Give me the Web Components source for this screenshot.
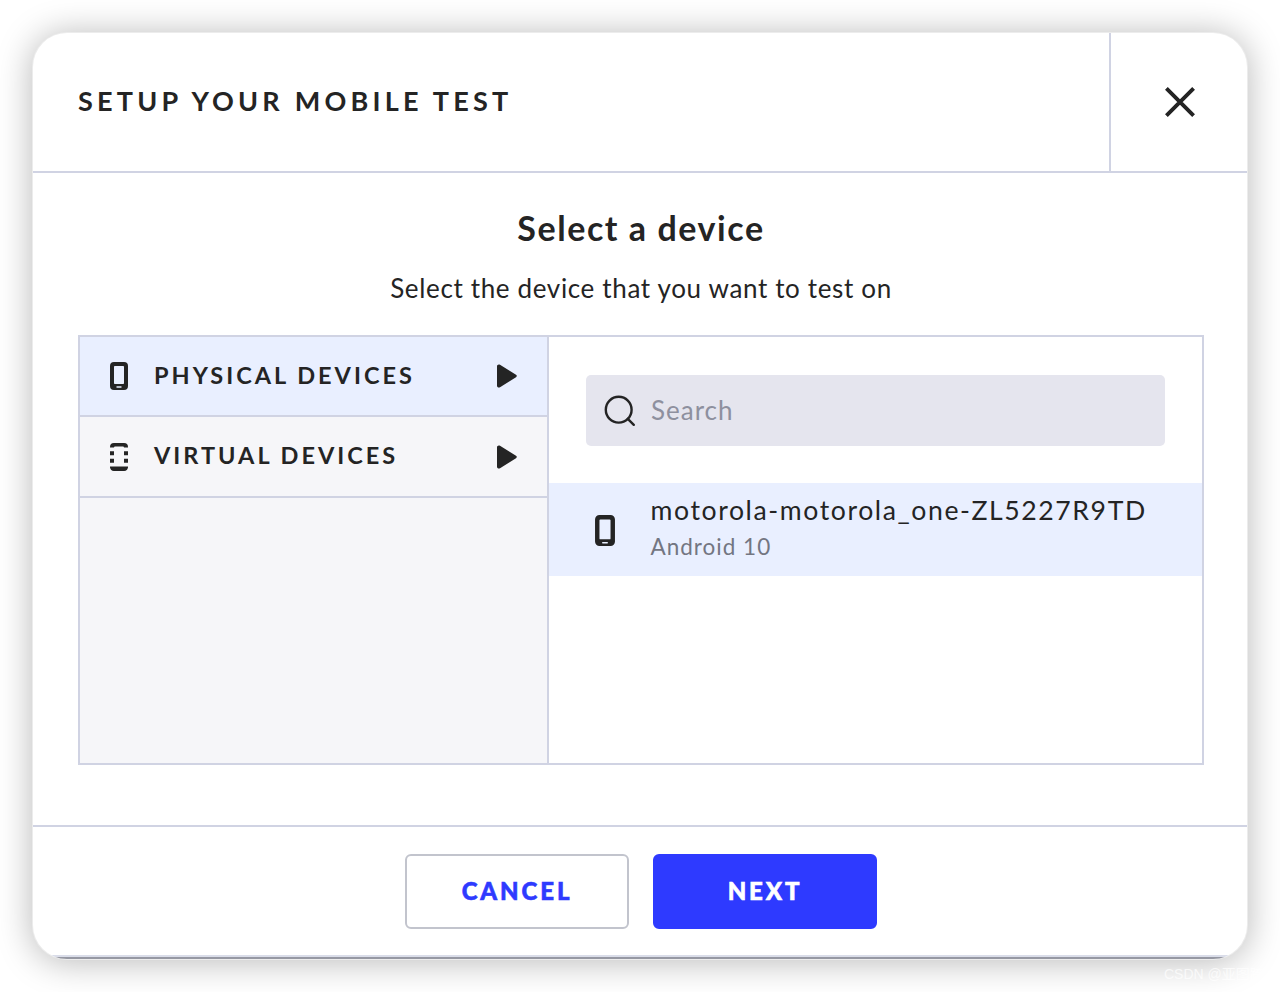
<!DOCTYPE html>
<html lang="en">
<head>
<meta charset="utf-8">
<title>Setup your mobile test</title>
<style>
    html, body { margin: 0; height: 100%; }
    body {
        box-sizing: border-box;
        height: 992px;
        padding: 33px;
        overflow: hidden;
        background: #fff;
        color: #242424;
        font-family: Lato, "Noto Sans CJK SC", sans-serif;
        --line: #d0d3e3;
        --active: #e9efff;
        --primary: #2e3aff;
    }
</style>
</head>
<body>
<setup-dialog>
    <span slot="title">SETUP YOUR MOBILE TEST</span>
    <dialog-intro slot="intro">
        <span slot="heading">Select a device</span>
        <span slot="hint">Select the device that you want to test on</span>
    </dialog-intro>
    <device-picker>
        <device-tab slot="tab" icon="phone" active>PHYSICAL DEVICES</device-tab>
        <device-tab slot="tab" icon="virtual">VIRTUAL DEVICES</device-tab>
        <search-field>Search</search-field>
        <device-item>
            motorola-motorola_one-ZL5227R9TD
            <span slot="os">Android 10</span>
        </device-item>
    </device-picker>
    <dialog-button slot="action">CANCEL</dialog-button>
    <dialog-button slot="action" primary>NEXT</dialog-button>
</setup-dialog>
<page-mark>CSDN @亚图跨际</page-mark>

<script>
const icons = {
    phone: `<svg viewBox="0 0 18 28"><path fill-rule="evenodd" d="M4 0h10a4 4 0 0 1 4 4v20a4 4 0 0 1-4 4H4a4 4 0 0 1-4-4V4a4 4 0 0 1 4-4zM4.800 4a.8.8 0 0 0-.8.8V21.200a.8.8 0 0 0 .8.8h8.400a.8.8 0 0 0 .8-.8V4.800a.8.8 0 0 0-.8-.8zM7 24.300a.7.7 0 0 0 0 1.400h4a.7.7 0 0 0 0-1.400z"/></svg>`,
    virtual: `<svg viewBox="0 0 18 28"><path d="M4 0h10a4 4 0 0 1 4 4v.500h-4a1 1 0 0 0-1-1H5a1 1 0 0 0-1 1H0V4a4 4 0 0 1 4-4zM0 8.300h4v4H0zM14 8.300h4v4h-4zM0 15.800h4v4H0zM14 15.800h4v4h-4zM0 23.500h18a4 4 0 0 1-4 4.500H4a4 4 0 0 1-4-4.500z"/></svg>`,
    play: `<svg viewBox="0 0 20 24"><path d="M0 2.300C0 .700 1.700-.1 3 .8L19 10.800q1.600 1.200 0 2.400L3 23.200C1.700 24.100 0 23.300 0 21.700z"/></svg>`,
    search: `<svg viewBox="0 0 32 32" fill="none" stroke="currentColor" stroke-width="2.400" stroke-linecap="round"><circle cx="14.700" cy="14.700" r="12.900"/><path d="M23.800 23.800L29.800 29.800"/></svg>`,
    close: `<svg viewBox="0 0 30 30" fill="none" stroke="currentColor" stroke-width="3.900"><path d="M1.400 1.400L28.600 28.600M28.600 1.400L1.400 28.600"/></svg>`
};

class SetupDialog extends HTMLElement {
    constructor() {
        super();
        this.attachShadow({mode:'open'});
        this.shadowRoot.innerHTML = `
        <style>
        :host {
            display: grid;
            grid-template-rows: 140px 1fr 134px;
            height: 926px;
            border-radius: 34px;
            overflow: hidden;
            background: #fff;
            box-shadow: 0 0 0 1px #ececec, 0 2px 34px 2px rgba(0, 0, 0, .27);
        }
        header {
            display: grid;
            grid-template-columns: 1fr 138px;
            box-sizing: border-box;
            border-bottom: var(--line) solid 2px;
        }
        h1 {
            display: flex; align-items: center;
            margin: 0; padding: 0 0 3px 45px;
            font-size: 27px; font-weight: 700;
            letter-spacing: 4.23px;
            white-space: nowrap;
        }
        button {
            display: flex; align-items: center; justify-content: center;
            padding: 0 0 1px 1px;
            border: 0;
            border-left: var(--line) solid 2px;
            background: none;
            color: inherit;
        }
        button svg { width: 30px; height: 30px; }
        main { padding: 0 43px 0 45px; }
        footer {
            display: flex; justify-content: center;
            gap: 24px;
            box-sizing: border-box;
            padding: 27px 0 0 2px;
            border-top: var(--line) solid 2px;
            border-bottom: #9698a3 solid 2px;
            box-shadow: inset 0 -2px #dadde9;
        }
        </style>
        <header>
            <h1><slot name="title"></slot></h1>
            <button aria-label="Close">${icons.close}</button>
        </header>
        <main><slot name="intro"></slot><slot></slot></main>
        <footer><slot name="action"></slot></footer>
        `;
    }
}

class DialogIntro extends HTMLElement {
    constructor() {
        super();
        this.attachShadow({mode:'open'});
        this.shadowRoot.innerHTML = `
        <style>
        :host { display: block; height: 162px; text-align: center; white-space: nowrap; }
        h2 {
            margin: 0; padding-top: 34px;
            font-size: 34px; line-height: 42px; font-weight: 700;
            letter-spacing: 1.55px;
        }
        p {
            margin: 0; padding-top: 22px;
            font-size: 26px; line-height: 34px; font-weight: 400;
            letter-spacing: .65px;
        }
        </style>
        <h2><slot name="heading"></slot></h2>
        <p><slot name="hint"></slot></p>
        `;
    }
}

class DevicePicker extends HTMLElement {
    constructor() {
        super();
        this.attachShadow({mode:'open'});
        this.shadowRoot.innerHTML = `
        <style>
        :host {
            display: grid;
            grid-template-columns: 469px 1fr;
            box-sizing: border-box;
            height: 430px;
            border: var(--line) solid 2px;
        }
        nav {
            box-sizing: border-box;
            border-right: var(--line) solid 2px;
            background: #f6f6f9;
        }
        section { padding-top: 38px; }
        </style>
        <nav><slot name="tab"></slot></nav>
        <section><slot></slot></section>
        `;
    }
}

class DeviceTab extends HTMLElement {
    constructor() {
        super();
        this.attachShadow({mode:'open'});
        this.shadowRoot.innerHTML = `
        <style>
        :host {
            display: grid;
            grid-template-columns: 18px 1fr 20px;
            column-gap: 26px;
            align-items: center;
            box-sizing: border-box;
            height: 80.4px;
            padding: 0 30px;
            border-bottom: var(--line) solid 2px;
            font-size: 23.5px; font-weight: 700;
            letter-spacing: 3px;
            white-space: nowrap;
        }
        :host([active]) { background: var(--active); }
        svg { display: block; width: 100%; fill: currentColor; }
        span { padding-bottom: 2.5px; }
        </style>
        ${icons[this.getAttribute('icon')]}
        <span><slot></slot></span>
        ${icons.play}
        `;
    }
}

class SearchField extends HTMLElement {
    constructor() {
        super();
        this.attachShadow({mode:'open'});
        this.shadowRoot.innerHTML = `
        <style>
        :host {
            display: flex; align-items: center;
            gap: 15px;
            box-sizing: border-box;
            height: 71px;
            margin: 0 37px 37px;
            padding: 0 18px;
            border-radius: 5px;
            background: #e5e5ee;
            color: #8e909e;
            font-size: 26px;
            letter-spacing: 1px;
        }
        svg { width: 32px; height: 32px; color: #242424; }
        span { padding-bottom: 2px; }
        </style>
        ${icons.search}
        <span><slot></slot></span>
        `;
    }
}

class DeviceItem extends HTMLElement {
    constructor() {
        super();
        this.attachShadow({mode:'open'});
        this.shadowRoot.innerHTML = `
        <style>
        :host {
            display: flex; align-items: center;
            gap: 35.5px;
            box-sizing: border-box;
            height: 93px;
            padding-left: 46px;
            background: var(--active);
            white-space: nowrap;
        }
        svg { width: 20px; height: 31px; margin-top: 1px; fill: currentColor; }
        .text { padding-bottom: 3px; }
        .name { font-size: 26.6px; line-height: 36px; letter-spacing: 1.6px; }
        .os { color: #737682; font-size: 22.5px; line-height: 37px; letter-spacing: 1px; }
        </style>
        ${icons.phone}
        <div class="text">
            <div class="name"><slot></slot></div>
            <div class="os"><slot name="os"></slot></div>
        </div>
        `;
    }
}

class DialogButton extends HTMLElement {
    constructor() {
        super();
        this.attachShadow({mode:'open'});
        this.shadowRoot.innerHTML = `
        <style>
        :host { display: block; width: 224px; height: 75px; }
        button {
            box-sizing: border-box;
            width: 100%; height: 100%;
            padding: 0 0 2px;
            border: #c2c4cd solid 2px;
            border-radius: 6px;
            background: #fff;
            color: var(--primary);
            font: 900 24px Lato, sans-serif;
            letter-spacing: 2.9px;
            -webkit-text-stroke: .6px;
        }
        :host([primary]) button {
            border-color: var(--primary);
            background: var(--primary);
            color: #fff;
        }
        </style>
        <button><slot></slot></button>
        `;
    }
}

class PageMark extends HTMLElement {
    constructor() {
        super();
        this.attachShadow({mode:'open'});
        this.shadowRoot.innerHTML = `
        <style>
        :host {
            position: absolute; left: 1164px; top: 965px;
            color: rgba(255, 255, 255, .7);
            font: 14px/18px "Liberation Sans", "Noto Sans CJK SC", sans-serif;
            white-space: nowrap;
        }
        </style>
        <slot></slot>
        `;
    }
}

customElements.define('setup-dialog', SetupDialog);
customElements.define('dialog-intro', DialogIntro);
customElements.define('device-picker', DevicePicker);
customElements.define('device-tab', DeviceTab);
customElements.define('search-field', SearchField);
customElements.define('device-item', DeviceItem);
customElements.define('dialog-button', DialogButton);
customElements.define('page-mark', PageMark);
</script>
</body>
</html>
